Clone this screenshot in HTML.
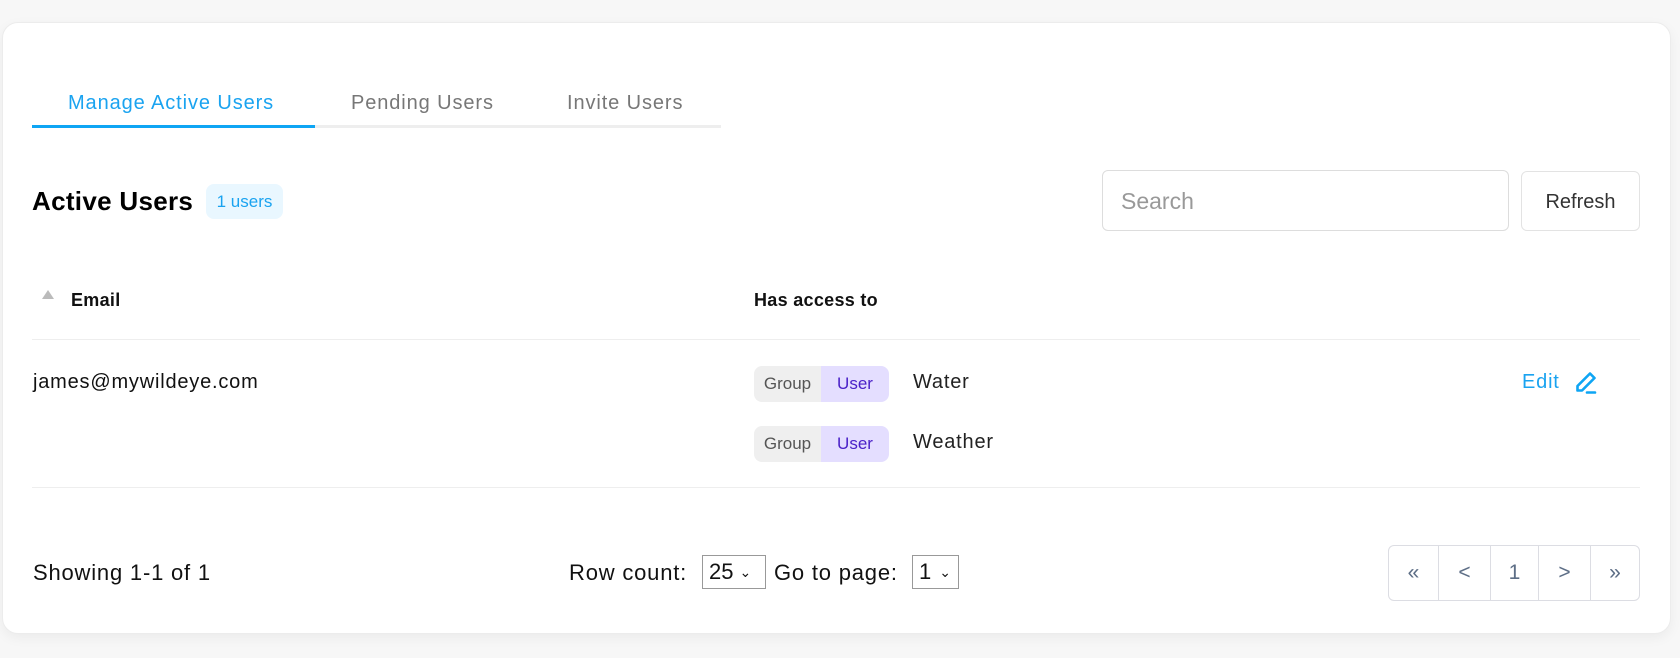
<!DOCTYPE html>
<html><head><meta charset="utf-8"><style>
*{box-sizing:border-box;margin:0;padding:0}
body{width:1680px;height:658px;background:#f7f7f7;font-family:"Liberation Sans",Arial,sans-serif;position:relative;overflow:hidden;color:#111}
.card{position:absolute;left:2px;top:22px;width:1669px;height:612px;background:#fff;border:1px solid #ececec;border-radius:16px;box-shadow:0 4px 12px rgba(0,0,0,.05)}
.a{position:absolute;white-space:nowrap}
.tab{font-size:20px;letter-spacing:.9px;color:#777;top:92px}
.chip{position:absolute;height:36px;width:135px;border-radius:8px;overflow:hidden;display:flex;font-size:17px}
.chip span:first-child{background:#efefef;color:#555;width:67px;display:flex;align-items:center;justify-content:center}
.chip span:last-child{background:#e4deff;color:#4b22c8;flex:1;display:flex;align-items:center;justify-content:center}
.sel{position:absolute;top:555px;height:34px;border:1px solid #999;font-size:22px;display:flex;align-items:center;padding-left:6px}
.pg{position:absolute;left:1388px;top:545px;width:252px;height:56px;border:1px solid #dcdde3;border-radius:6px;display:flex}
.pg div{border-right:1px solid #dcdde3;display:flex;align-items:center;justify-content:center;color:#5d6e86;font-size:21px}
.pg div:last-child{border-right:none}
.t{font-size:20px;letter-spacing:.8px}
.f{font-size:22px;letter-spacing:.8px;top:560px}
</style></head><body>
<div class="card"></div>
<div class="a tab" style="left:68px;color:#1aa3f0">Manage Active Users</div>
<div class="a tab" style="left:351px">Pending Users</div>
<div class="a tab" style="left:567px">Invite Users</div>
<div class="a" style="left:32px;top:125px;width:689px;height:3px;background:#eee"></div>
<div class="a" style="left:32px;top:125px;width:283px;height:3px;background:#0ea5f4"></div>
<div class="a" style="left:32px;top:186px;font-size:26px;letter-spacing:.3px;font-weight:600;color:#000">Active Users</div>
<div class="a" style="left:206px;top:184px;width:77px;height:35px;background:#e9f7ff;border-radius:8px;color:#1aa3f0;font-size:17px;display:flex;align-items:center;justify-content:center">1 users</div>
<div class="a" style="left:1102px;top:170px;width:407px;height:61px;border:1px solid #ddd;border-radius:6px;font-size:23px;color:#999;padding:17px 18px">Search</div>
<div class="a" style="left:1521px;top:171px;width:119px;height:60px;border:1px solid #e3e3e3;border-radius:6px;font-size:20px;color:#333;display:flex;align-items:center;justify-content:center;padding-top:2px">Refresh</div>
<div class="a" style="left:42px;top:290px;width:0;height:0;border-left:6px solid transparent;border-right:6px solid transparent;border-bottom:9px solid #bbb"></div>
<div class="a" style="left:71px;top:290px;font-size:18px;font-weight:600;letter-spacing:.3px">Email</div>
<div class="a" style="left:754px;top:290px;font-size:18px;font-weight:600;letter-spacing:.3px">Has access to</div>
<div class="a" style="left:32px;top:339px;width:1608px;height:1px;background:#eee"></div>
<div class="a t" style="left:33px;top:371px">james@mywildeye.com</div>
<div class="chip" style="left:754px;top:366px"><span>Group</span><span>User</span></div>
<div class="a t" style="left:913px;top:371px;color:#222">Water</div>
<div class="chip" style="left:754px;top:426px"><span>Group</span><span>User</span></div>
<div class="a t" style="left:913px;top:431px;color:#222">Weather</div>
<div class="a t" style="left:1522px;top:371px;color:#1aa3f0">Edit</div>
<svg class="a" style="left:1573px;top:370px" width="26" height="26" viewBox="0 0 26 26" fill="none" stroke="#0ea5f4" stroke-width="2.6" stroke-linecap="round" stroke-linejoin="round"><path d="M17 3.5l4.5 4.5L9 20.5H4.5V16Z"/><path d="M14 22.5h8"/></svg>
<div class="a" style="left:32px;top:487px;width:1608px;height:1px;background:#eee"></div>
<div class="a f" style="left:33px">Showing 1-1 of 1</div>
<div class="a f" style="left:569px">Row count:</div>
<div class="sel" style="left:702px;width:64px">25<span style="font-size:14px;margin-left:6px">&#8964;</span></div>
<div class="a f" style="left:774px">Go to page:</div>
<div class="sel" style="left:912px;width:47px">1<span style="font-size:14px;margin-left:8px">&#8964;</span></div>
<div class="pg"><div style="width:50px">«</div><div style="width:52px">&lt;</div><div style="width:48px">1</div><div style="width:52px">&gt;</div><div style="flex:1">»</div></div>
</body></html>
